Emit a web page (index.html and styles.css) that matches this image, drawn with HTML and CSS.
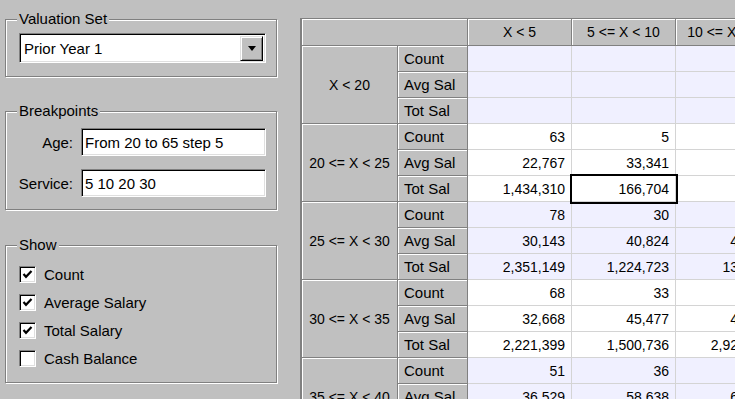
FILE: index.html
```html
<!DOCTYPE html>
<html lang="en">

<head>
    <meta charset="UTF-8">
    <meta name="viewport" content="width=device-width, initial-scale=1.0">
    <title>Age / Service Matrix</title>

    <link rel="stylesheet" href="styles.css">
</head>

<body>
    <div class="window">
        <div class="side">
            <div class="group group-valuation">
                <span class="group-title">Valuation Set</span>
                <div class="combo">
                    <span class="combo-text">Prior Year 1</span>
                    <span class="combo-btn"><span class="arrow"></span></span>
                </div>
            </div>

            <div class="group group-breaks">
                <span class="group-title">Breakpoints</span>
                <div class="fields">
                    <label class="field-label">Age:</label>
                    <div class="edit">From 20 to 65 step 5</div>
                    <label class="field-label">Service:</label>
                    <div class="edit">5 10 20 30</div>
                </div>
            </div>

            <div class="group group-show">
                <span class="group-title">Show</span>
                <div class="check">
                    <span class="box"><svg width="15" height="15" viewBox="0 0 15 15"><path d="M3.5 7 L6 9.8 L11.5 4" fill="none" stroke="#000" stroke-width="2.2"/></svg></span>
                    Count
                </div>
                <div class="check">
                    <span class="box"><svg width="15" height="15" viewBox="0 0 15 15"><path d="M3.5 7 L6 9.8 L11.5 4" fill="none" stroke="#000" stroke-width="2.2"/></svg></span>
                    Average Salary
                </div>
                <div class="check">
                    <span class="box"><svg width="15" height="15" viewBox="0 0 15 15"><path d="M3.5 7 L6 9.8 L11.5 4" fill="none" stroke="#000" stroke-width="2.2"/></svg></span>
                    Total Salary
                </div>
                <div class="check">
                    <span class="box"></span>
                    Cash Balance
                </div>
            </div>
        </div>

        <div class="grid">
            <div class="hcell corner"></div>
            <div class="hcell colhead">X &lt; 5</div>
            <div class="hcell colhead">5 &lt;= X &lt; 10</div>
            <div class="hcell colhead">10 &lt;= X &lt; 20</div>

            <!-- X < 20 -->
            <div class="hcell rowhead">X &lt; 20</div>
            <div class="hcell label">Count</div>
            <div class="cell alt"></div>
            <div class="cell alt"></div>
            <div class="cell alt"></div>
            <div class="hcell label">Avg Sal</div>
            <div class="cell alt"></div>
            <div class="cell alt"></div>
            <div class="cell alt"></div>
            <div class="hcell label">Tot Sal</div>
            <div class="cell alt"></div>
            <div class="cell alt"></div>
            <div class="cell alt"></div>

            <!-- 20 <= X < 25 -->
            <div class="hcell rowhead">20 &lt;= X &lt; 25</div>
            <div class="hcell label">Count</div>
            <div class="cell">63</div>
            <div class="cell">5</div>
            <div class="cell"></div>
            <div class="hcell label">Avg Sal</div>
            <div class="cell">22,767</div>
            <div class="cell">33,341</div>
            <div class="cell"></div>
            <div class="hcell label">Tot Sal</div>
            <div class="cell">1,434,310</div>
            <div class="cell sel">166,704</div>
            <div class="cell"></div>

            <!-- 25 <= X < 30 -->
            <div class="hcell rowhead">25 &lt;= X &lt; 30</div>
            <div class="hcell label">Count</div>
            <div class="cell alt">78</div>
            <div class="cell alt">30</div>
            <div class="cell alt">3</div>
            <div class="hcell label">Avg Sal</div>
            <div class="cell alt">30,143</div>
            <div class="cell alt">40,824</div>
            <div class="cell alt">45,210</div>
            <div class="hcell label">Tot Sal</div>
            <div class="cell alt">2,351,149</div>
            <div class="cell alt">1,224,723</div>
            <div class="cell alt">135,630</div>

            <!-- 30 <= X < 35 -->
            <div class="hcell rowhead">30 &lt;= X &lt; 35</div>
            <div class="hcell label">Count</div>
            <div class="cell">68</div>
            <div class="cell">33</div>
            <div class="cell">64</div>
            <div class="hcell label">Avg Sal</div>
            <div class="cell">32,668</div>
            <div class="cell">45,477</div>
            <div class="cell">45,736</div>
            <div class="hcell label">Tot Sal</div>
            <div class="cell">2,221,399</div>
            <div class="cell">1,500,736</div>
            <div class="cell">2,927,104</div>

            <!-- 35 <= X < 40 -->
            <div class="hcell rowhead">35 &lt;= X &lt; 40</div>
            <div class="hcell label">Count</div>
            <div class="cell alt">51</div>
            <div class="cell alt">36</div>
            <div class="cell alt">8</div>
            <div class="hcell label">Avg Sal</div>
            <div class="cell alt">36,529</div>
            <div class="cell alt">58,638</div>
            <div class="cell alt">61,245</div>
            <div class="hcell label">Tot Sal</div>
            <div class="cell alt">1,863,000</div>
            <div class="cell alt">2,110,968</div>
            <div class="cell alt">489,960</div>
        </div>
    </div>
</body>

</html>
```

FILE: styles.css
```css
* {
    margin: 0;
    padding: 0;
    box-sizing: border-box;
}

body {
    background: #c0c0c0;
    font-family: "Liberation Sans", Arial, sans-serif;
    font-size: 15px;
    color: #000;
    overflow: hidden;
}

.window {
    display: flex;
    width: 735px;
    height: 399px;
    overflow: hidden;
}

/* left column */
.side {
    flex: none;
    width: 300px;
    padding: 19px 0 0 5px;
}

.group {
    position: relative;
    width: 272px;
    border: 1px solid #808080;
    box-shadow: inset 1px 1px #fff, 1px 1px #fff;
}

.group-title {
    position: absolute;
    top: -10px;
    left: 11px;
    padding: 0 2px;
    line-height: 17px;
    background: #c0c0c0;
}

.group-valuation {
    padding: 13px 10px 13px 13px;
}

.group-breaks {
    margin-top: 34px;
    padding: 16px 10px 12px 5px;
}

.group-show {
    margin-top: 35px;
    padding: 14px 10px 10px 13px;
}

.sunken {
    border: 1px solid;
    border-color: #808080 #fff #fff #808080;
    box-shadow: inset 1px 1px #000, inset -1px -1px #dfdfdf;
    background: #fff;
}

.combo {
    display: flex;
    align-items: center;
    width: 247px;
    height: 30px;
    border: 1px solid;
    border-color: #808080 #fff #fff #808080;
    box-shadow: inset 1px 1px #000, inset -1px -1px #dfdfdf;
    background: #fff;
}

.combo-text {
    flex: 1;
    padding-left: 4px;
}

.combo-btn {
    display: flex;
    align-items: center;
    justify-content: center;
    width: 23px;
    height: 25px;
    margin-right: 2px;
    background: #c0c0c0;
    border: 1px solid;
    border-color: #dfdfdf #000 #000 #dfdfdf;
    box-shadow: inset 1px 1px #fff, inset -1px -1px #808080;
}

.arrow {
    width: 0;
    height: 0;
    border-left: 4.5px solid transparent;
    border-right: 4.5px solid transparent;
    border-top: 5px solid #000;
}

.fields {
    display: grid;
    grid-template-columns: 62px 185px;
    column-gap: 8px;
    row-gap: 13px;
    align-items: center;
}

.field-label {
    text-align: right;
}

.edit {
    display: flex;
    align-items: center;
    height: 28px;
    padding-left: 3px;
    border: 1px solid;
    border-color: #808080 #fff #fff #808080;
    box-shadow: inset 1px 1px #000, inset -1px -1px #dfdfdf;
    background: #fff;
}

.check {
    display: flex;
    align-items: center;
    gap: 8px;
    height: 28px;
}

.box {
    display: flex;
    align-items: center;
    justify-content: center;
    width: 17px;
    height: 17px;
    border: 1px solid;
    border-color: #808080 #fff #fff #808080;
    box-shadow: inset 1px 1px #000, inset -1px -1px #dfdfdf;
    background: #fff;
}

/* matrix */
.grid {
    flex: none;
    align-self: flex-start;
    display: grid;
    grid-template-columns: 96px 70px 104px 104px 104px;
    grid-template-rows: 27px;
    grid-auto-rows: 26px;
    margin-top: 18px;
    border-left: 2px solid #808080;
    border-top: 1px solid #808080;
}

.hcell {
    display: flex;
    align-items: center;
    background: #c0c0c0;
    border-right: 1px solid #808080;
    border-bottom: 1px solid #808080;
    box-shadow: inset 1px 1px #fff;
    white-space: nowrap;
}

.corner {
    grid-column: span 2;
}

.colhead {
    justify-content: center;
    font-size: 14px;
}

.rowhead {
    grid-row: span 3;
    justify-content: center;
    font-size: 14px;
}

.label {
    padding-left: 6px;
}

.cell {
    display: flex;
    align-items: center;
    justify-content: flex-end;
    padding-right: 6px;
    background: #fff;
    border-right: 1px solid #d4d4d4;
    border-bottom: 1px solid #d4d4d4;
    font-size: 14px;
    white-space: nowrap;
}

.cell.alt {
    background: #f0f0ff;
}

.cell.sel {
    position: relative;
    z-index: 1;
    outline: 2px solid #000;
}
```
